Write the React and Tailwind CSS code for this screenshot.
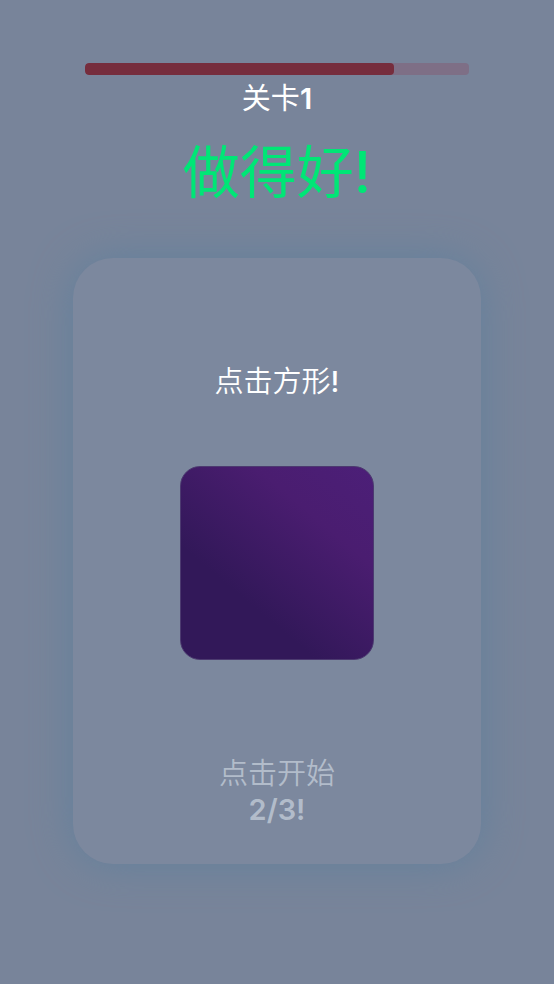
const level = 1;
const taps = 2;
const goal = 3;
const progress = 80.5;

const ProgressBar = ({ value }) => (
  <div
    className="w-full h-3 rounded bg-[#7e6f86] overflow-hidden"
    role="progressbar"
    aria-label="进度"
    aria-valuenow={value}
    aria-valuemin={0}
    aria-valuemax={100}
  >
    <div className="h-full rounded bg-[#762d3d]" style={{ width: `${value}%` }}></div>
  </div>
);

const App = () => {
  return (
    <main className="min-h-screen bg-[#78849a] px-[73px] pt-[63px] pb-[120px] text-center text-white font-['Inter','Noto_Sans_CJK_SC',sans-serif]">
      <header className="px-3">
        <ProgressBar value={progress} />
        <p className="mt-2 text-[29px] leading-8">
          关卡<span className="font-semibold">{level}</span>
        </p>
        <h1 className="mt-[26px] text-[57px] leading-[64px] text-[#00e676]">
          做得好<span className="font-medium">!</span>
        </h1>
      </header>

      <section className="mt-[53px] flex flex-col items-center rounded-[40px] bg-[#7c889e] pt-[106px] pb-9 shadow-[0_0_40px_#62809c]">
        <h2 className="text-[29px] leading-9 font-[350]">
          点击方形<span className="font-medium">!</span>
        </h2>
        <button
          type="button"
          aria-label="方形"
          className="mt-[66px] size-[194px] rounded-[20px] border border-[#4c3a70] bg-[linear-gradient(40deg,#321859_32%,#4a1d70_72%,#4c1f78)]"
        ></button>
        <p className="mt-24 text-[29px] leading-9 font-[350] text-[#b2bcca]">
          点击开始
          <span className="block font-semibold">
            {taps}/{goal}!
          </span>
        </p>
      </section>
    </main>
  );
};

export default App;
